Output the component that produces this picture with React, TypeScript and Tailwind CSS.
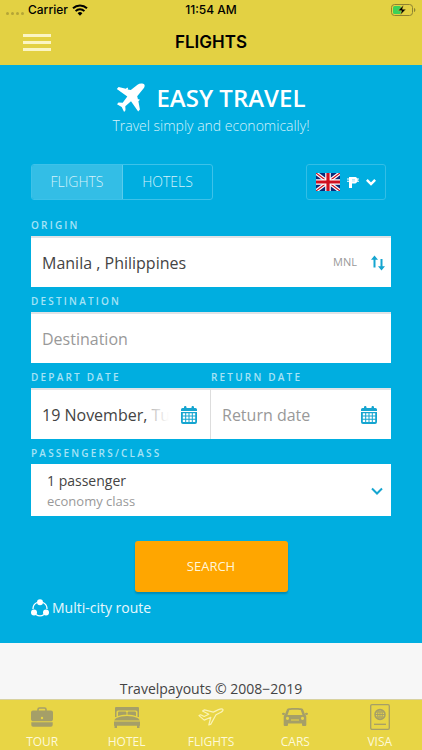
import { useState, type ReactNode } from "react";

const labelClass =
  "flex h-[25px] items-center pt-0.5 text-[10px] font-semibold uppercase leading-none tracking-[0.22em] text-[#a6e3f6]";
const fieldClass =
  "relative flex h-[51px] items-center border-t-2 border-[#e0e3e6] bg-white text-[#444444]";
const inputClass =
  "h-full min-w-0 flex-1 bg-transparent text-base text-[#444444] outline-none placeholder:text-[#999999] placeholder:opacity-100";

function WifiIcon() {
  return (
    <svg viewBox="0 0 16 12" className="h-3 w-4" aria-hidden="true">
      <path d="M8 11.8 5.6 9.2a3.5 3.5 0 0 1 4.8 0Z" />
      <path
        d="M3.6 7.1a6.3 6.3 0 0 1 8.8 0M1 4.3a10.2 10.2 0 0 1 14 0"
        fill="none"
        stroke="black"
        strokeWidth="2"
      />
    </svg>
  );
}

function BatteryIcon() {
  return (
    <svg viewBox="0 0 25 12" className="h-3 w-[25px]" aria-hidden="true">
      <rect x="0.5" y="0.5" width="21" height="11" rx="3" fill="none" stroke="#8d8232" />
      <path d="M23 4v4c1.8-.5 1.8-3.5 0-4Z" fill="#8d8232" />
      <rect x="2" y="2" width="8" height="8" rx="1.5" fill="#3bd158" />
      <path
        d="M12.5 1 7 6.7h3.5L9.4 11 15 5.2h-3.5Z"
        fill="black"
        stroke="#e3d143"
        strokeWidth="0.5"
      />
    </svg>
  );
}

function PlaneLogo() {
  return (
    <svg viewBox="0 0 30 30" className="h-[30px] w-[30px]" fill="white" aria-hidden="true">
      <path d="M28.300 1.500c.7.8.4 2.600-.8 4.100l-6.300 7.700.8 3.200 1-.5.7 1-1.300 1.200 1.500 8.300-1.700 2-7.200-10.300-5.700 5 .2 4-1.400 1.800-2.400-5L1 21.300l1.500-1.700 4.200.1 4.600-6.300L.8 6l1.800-2 7.300 1.800 1.300-1.300.9.8-.4 1.100 3.100.6 6.700-5.300c2.300-1.600 5.800-1.200 6.800-.2Z" />
    </svg>
  );
}

function UkFlag() {
  return (
    <svg viewBox="0 0 24 18" className="h-[18px] w-6" aria-hidden="true">
      <rect width="24" height="18" fill="#0b2a78" />
      <path d="M0 0 24 18M24 0 0 18" stroke="white" strokeWidth="3.6" />
      <path d="M0 0 24 18M24 0 0 18" stroke="#cf1020" strokeWidth="1.2" />
      <path d="M12 0v18M0 9h24" stroke="white" strokeWidth="5.6" />
      <path d="M12 0v18M0 9h24" stroke="#cf1020" strokeWidth="3.2" />
    </svg>
  );
}

function PesoIcon() {
  return (
    <svg viewBox="0 0 12 12" className="h-3 w-3" aria-hidden="true">
      <path
        fill="white"
        d="M2 1h5.500c1.700 0 2.500.7 2.900 1.500H12v1h-1.300v1.200H12v1h-1.800C9.700 6.900 8.800 7.500 7.300 7.500H5V12H2V5.700H0v-1h2V3.500H0v-1h2Z"
      />
      <path d="M5 3.600h3M5 5h3" stroke="#8fdcf3" strokeWidth="0.7" />
    </svg>
  );
}

function Chevron({ className, width }: { className: string; width: number }) {
  return (
    <svg viewBox="0 0 12 8" className={className} fill="none" aria-hidden="true">
      <path d="M1 1.500 6 6.500l5-5" stroke="currentColor" strokeWidth={width} />
    </svg>
  );
}

function SwapIcon() {
  return (
    <svg viewBox="0 0 14 16" className="h-4 w-[14px]" aria-hidden="true">
      <path d="M3.5 12.500V3M10.500 4v9" stroke="#15a5d0" strokeWidth="2" />
      <path d="M3.500.5 7 4.700H0ZM10.500 15.500 14 11.300H7Z" fill="#15a5d0" />
    </svg>
  );
}

function CalendarIcon() {
  return (
    <svg viewBox="0 0 16 18" className="h-[18px] w-4 shrink-0" fill="#15a5d0" aria-hidden="true">
      <path d="M1.500 2H3V1.200a1.200 1.200 0 0 1 2.500 0V2h5v-.8a1.200 1.200 0 0 1 2.500 0V2h1.500A1.500 1.500 0 0 1 16 3.500V5H0V3.500A1.500 1.500 0 0 1 1.500 2Z" />
      <path
        fillRule="evenodd"
        d="M0 6h16v10a2 2 0 0 1-2 2H2a2 2 0 0 1-2-2ZM1.800 7.300v2.200h2.400V7.300Zm3.400 0v2.200h2.300V7.300Zm3.300 0v2.200h2.300V7.300Zm3.300 0v2.200h2.400V7.300ZM1.800 10.500v2.200h2.400v-2.200Zm3.400 0v2.200h2.300v-2.200Zm3.300 0v2.200h2.300v-2.200Zm3.300 0v2.200h2.400v-2.200ZM1.800 13.700v2.200h2.400v-2.200Zm3.400 0v2.200h2.300v-2.200Zm3.300 0v2.200h2.300v-2.200Zm3.300 0v2.200h2.400v-2.200Z"
      />
    </svg>
  );
}

function RouteIcon() {
  return (
    <svg viewBox="0 0 18 18" className="h-[18px] w-[18px]" fill="white" aria-hidden="true">
      <path
        d="M6 3.500A7 7 0 0 0 2 10M12 3.500A7 7 0 0 1 16 10M5 15.500a7 7 0 0 0 8 0"
        fill="none"
        stroke="white"
        strokeWidth="1.3"
      />
      <circle cx="9" cy="3.200" r="3" />
      <circle cx="3" cy="13.500" r="3" />
      <circle cx="15" cy="13.500" r="3" />
    </svg>
  );
}

function BriefcaseIcon() {
  return (
    <svg viewBox="0 0 22 20" className="h-5 w-[22px]" fill="#a59f68" aria-hidden="true">
      <path d="M7 4V2.500A1.500 1.500 0 0 1 8.500 1h5A1.500 1.500 0 0 1 15 2.500V4" fill="none" stroke="#a59f68" strokeWidth="1.6" />
      <path
        fillRule="evenodd"
        d="M2 3.500h18a2 2 0 0 1 2 2V12c0 1.500-1 2.300-2.500 2.300h-17C1 14.300 0 13.500 0 12V5.500a2 2 0 0 1 2-2Zm9 6.300a1.200 1.200 0 1 0 0 2.400 1.200 1.200 0 0 0 0-2.400Z"
      />
      <path d="M.3 15.300h21.400V18a1.800 1.800 0 0 1-1.800 1.800H2.100A1.800 1.800 0 0 1 .3 18Z" />
    </svg>
  );
}

function BedIcon() {
  return (
    <svg viewBox="0 0 26 21" className="h-[21px] w-[26px]" fill="#a59f68" aria-hidden="true">
      <path d="M2 0h22a1 1 0 0 1 1 1v9h-1.500V5a1.500 1.500 0 0 0-1.500-1.500H4A1.500 1.500 0 0 0 2.500 5v5H1V1a1 1 0 0 1 1-1Z" />
      <path d="M4 9V6c0-1 .5-1.500 1.500-1.500h5.500c1 0 1.500.5 1.500 1.500v1.800C9 7.900 6.300 8.200 4 9ZM13.500 7.800V6c0-1 .5-1.500 1.500-1.500h5.500c1 0 1.500.5 1.500 1.500v3c-2.300-.8-5-1.100-8.500-1.200Z" />
      <path d="M2.500 11c5-2.700 16-2.700 21 0 1.200.7 2 1.500 2.200 2.500H.3c.2-1 1-1.800 2.200-2.500ZM0 14.500h26v4.200h-.5V21H23v-2.300H3V21H.5v-2.300H0Z" />
    </svg>
  );
}

function TabPlaneIcon() {
  return (
    <svg viewBox="0 0 26 18" className="h-[18px] w-[26px]" fill="none" stroke="#faf3b5" strokeWidth="1.2" strokeLinejoin="round" aria-hidden="true">
      <path d="m1 7.600 1.600-.8 3.600 1.700 4.600-2.200L4.500 3l2-1.200 8.800 2.300L20.500 1.600c2-.9 3.900-.9 4.400-.1s-.8 2.200-2.500 3L18 6.800l-5.200 9.300-2 .9 2-7.700-6.600 2.800Z" />
    </svg>
  );
}

function CarIcon() {
  return (
    <svg viewBox="0 0 26 18" className="h-[18px] w-[26px]" fill="#a59f68" aria-hidden="true">
      <path
        fillRule="evenodd"
        d="M7 .3C10 0 16 0 19 .3c1.200.1 2 .8 2.300 1.700L23 6.500c1 .7 1.300 1.500 1.300 3V17a1 1 0 0 1-1 1H21a1 1 0 0 1-1-1v-1.500H6V17a1 1 0 0 1-1 1H2.700a1 1 0 0 1-1-1V9.500c0-1.500.3-2.300 1.300-3L4.700 2C5 1.100 5.800.4 7 .3Zm.3 1.700-1.800 5h15l-1.800-5c-3-.4-8.400-.4-11.400 0ZM5.500 8.700a1.600 1.600 0 1 0 0 3.200 1.600 1.600 0 0 0 0-3.200Zm15 0a1.600 1.600 0 1 0 0 3.200 1.600 1.600 0 0 0 0-3.200ZM9 11.500v1h8v-1Z"
      />
      <path d="M0 5.500c.2-1 2.500-1.200 3-.3L2.500 7C1 7.200 0 6.700 0 5.500ZM26 5.500c-.2-1-2.500-1.200-3-.3l.5 1.800c1.500.2 2.500-.3 2.500-1.500Z" />
    </svg>
  );
}

function PassportIcon() {
  return (
    <svg viewBox="0 0 20 26" className="h-[26px] w-5" fill="none" stroke="#a59f68" aria-hidden="true">
      <rect x="0.7" y="0.7" width="18.6" height="24.6" rx="1.3" strokeWidth="1.3" />
      <circle cx="10" cy="10.500" r="5" strokeWidth="1.5" />
      <ellipse cx="10" cy="10.500" rx="2.300" ry="5" />
      <path d="M10 5.500v10M5 10.500h10M6 8h8M6 13h8" />
      <path d="M4 20.300h12" strokeWidth="1.3" />
    </svg>
  );
}

const tabs: { name: string; icon: ReactNode }[] = [
  { name: "TOUR", icon: <BriefcaseIcon /> },
  { name: "HOTEL", icon: <BedIcon /> },
  { name: "FLIGHTS", icon: <TabPlaneIcon /> },
  { name: "CARS", icon: <CarIcon /> },
  { name: "VISA", icon: <PassportIcon /> },
];

function Header() {
  return (
    <header className="bg-[#e3d143] font-['Inter',sans-serif] text-black">
      <div className="grid h-5 grid-cols-3 items-center px-1.5 text-xs font-medium">
        <div className="flex items-center gap-1">
          <span className="flex gap-0.5 pt-1.5">
            {[0, 1, 2, 3].map((dot) => (
              <i key={dot} className="h-[3px] w-[3px] rounded-full bg-[#b5a536]" />
            ))}
          </span>
          <span>Carrier</span>
          <WifiIcon />
        </div>
        <span className="text-center">11:54 AM</span>
        <span className="flex justify-end">
          <BatteryIcon />
        </span>
      </div>
      <div className="grid h-[45px] grid-cols-3 items-center px-[23px]">
        <button type="button" aria-label="Menu" className="flex w-7 flex-col gap-1">
          <span className="h-[3px] bg-[#fbf5c4]" />
          <span className="h-[3px] bg-[#fbf5c4]" />
          <span className="h-[3px] bg-[#fbf5c4]" />
        </button>
        <h1 className="text-center text-[17px] font-semibold">FLIGHTS</h1>
      </div>
    </header>
  );
}

function SearchForm() {
  const [mode, setMode] = useState("flights");

  return (
    <main className="bg-[#00aee0] px-[31px] pb-5 pt-[17px]">
      <div className="flex flex-col items-center text-white">
        <div className="flex items-center gap-2.5">
          <PlaneLogo />
          <h2 className="text-2xl font-semibold leading-8">EASY TRAVEL</h2>
        </div>
        <p className="text-sm font-light leading-6 text-[#d5f2fb]">
          Travel simply and economically!
        </p>
      </div>

      <div className="mt-[26px] flex h-9 justify-between pr-[5px]">
        <div className="flex overflow-hidden rounded-[3px] border border-[#3dc2e9] text-sm font-light text-[#d5f2fb]">
          <button
            type="button"
            aria-pressed={mode === "flights"}
            onClick={() => setMode("flights")}
            className={`w-[91px] border-r border-[#5accec] ${mode === "flights" ? "bg-[#33bee6]" : ""}`}
          >
            FLIGHTS
          </button>
          <button
            type="button"
            aria-pressed={mode === "hotels"}
            onClick={() => setMode("hotels")}
            className={`w-[89px] ${mode === "hotels" ? "bg-[#33bee6]" : ""}`}
          >
            HOTELS
          </button>
        </div>
        <button
          type="button"
          aria-label="Language and currency"
          className="flex w-20 items-center justify-center gap-[7px] rounded-[3px] border border-[#33bee6] text-white"
        >
          <UkFlag />
          <PesoIcon />
          <Chevron className="h-2 w-[10px]" width={3} />
        </button>
      </div>

      <form className="mt-[11px]" onSubmit={(e) => e.preventDefault()}>
        <label htmlFor="origin" className={labelClass}>
          Origin
        </label>
        <div className={`${fieldClass} gap-[14px] pl-[11px] pr-[6px]`}>
          <input id="origin" className={inputClass} defaultValue="Manila , Philippines" />
          <span className="text-[11px] text-[#999999]">MNL</span>
          <button type="button" aria-label="Swap origin and destination">
            <SwapIcon />
          </button>
        </div>

        <label htmlFor="destination" className={labelClass}>
          Destination
        </label>
        <div className={`${fieldClass} px-[11px]`}>
          <input id="destination" className={inputClass} placeholder="Destination" />
        </div>

        <div className="grid grid-cols-2">
          <div>
            <label htmlFor="depart" className={labelClass}>
              Depart date
            </label>
            <div className={`${fieldClass} gap-3 border-r border-r-[#dddddd] pl-[11px] pr-[13px]`}>
              <input id="depart" className={inputClass} defaultValue="19 November, Tuesday" />
              <span className="pointer-events-none absolute inset-y-0 right-[41px] w-5 bg-linear-to-r from-white/60 to-white" />
              <CalendarIcon />
            </div>
          </div>
          <div>
            <label htmlFor="return" className={labelClass}>
              Return date
            </label>
            <div className={`${fieldClass} gap-3 pl-[11px] pr-[14px]`}>
              <input id="return" className={inputClass} placeholder="Return date" />
              <CalendarIcon />
            </div>
          </div>
        </div>

        <label htmlFor="passengers" className={labelClass}>
          Passengers/Class
        </label>
        <button
          id="passengers"
          type="button"
          className="flex h-[52px] w-full items-center justify-between bg-white pl-4 pr-2 pt-0.5 text-left"
        >
          <span className="flex flex-col">
            <span className="text-sm leading-[21px] text-[#444444]">1 passenger</span>
            <span className="text-[13px] leading-[21px] text-[#999999]">economy class</span>
          </span>
          <Chevron className="h-2 w-3 text-[#15a5d0]" width={2} />
        </button>

        <button
          type="submit"
          className="mx-auto mt-[25px] block h-[51px] w-[153px] rounded-[3px] bg-[#ffa600] text-[13px] text-[#fff6d9] shadow-[0_2px_2px_rgba(0,0,0,0.2)]"
        >
          SEARCH
        </button>
      </form>

      <a href="#multi-city" className="mt-1.5 inline-flex items-center gap-[3px] text-sm leading-5 text-[#e8f8fd]">
        <RouteIcon />
        Multi-city route
      </a>
    </main>
  );
}

export default function App() {
  return (
    <div className="flex min-h-screen flex-col bg-[#f7f7f7] font-['Open_Sans',sans-serif]">
      <Header />
      <SearchForm />
      <footer className="flex flex-1 items-end justify-center text-sm leading-5 text-[#444444]">
        Travelpayouts © 2008−2019
      </footer>
      <nav className="grid h-[51px] grid-cols-5 border-t border-[#d8d2a0] bg-[#e8d545]">
        {tabs.map(({ name, icon }) => (
          <a
            key={name}
            href={`#${name.toLowerCase()}`}
            className="flex flex-col items-center text-xs leading-4 text-[#fdf9d8]"
          >
            <span className="flex h-[34px] items-center">{icon}</span>
            {name}
          </a>
        ))}
      </nav>
    </div>
  );
}
